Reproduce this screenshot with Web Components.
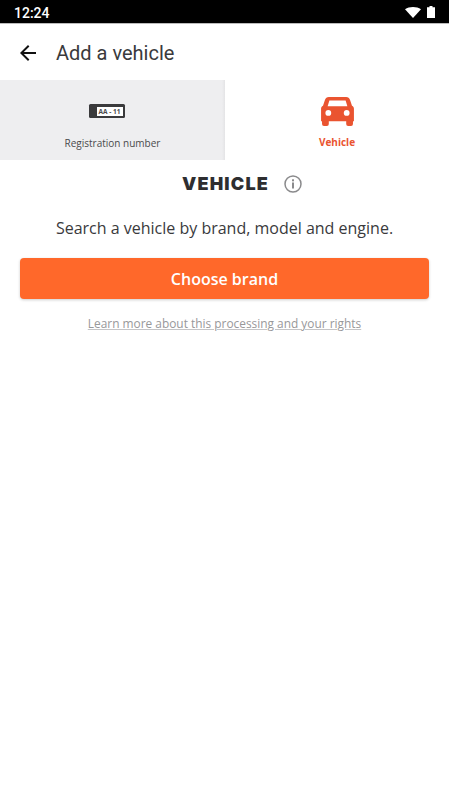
<!DOCTYPE html>
<html><head><meta charset="utf-8"><style>
html,body{margin:0;padding:0;background:#fff}
body{width:449px;height:800px;overflow:hidden}
</style></head><body>
<app-screen>
<status-bar></status-bar>
<app-bar>Add a vehicle</app-bar>
<tab-bar></tab-bar>
<vehicle-panel></vehicle-panel>
</app-screen>
<script>
function def(name, html){
  customElements.define(name, class extends HTMLElement{
    constructor(){super();this.attachShadow({mode:'open'}).innerHTML=html;}
  });
}
def('app-screen',`<style>:host{display:flex;flex-direction:column;width:449px;height:800px;background:#fff}</style><slot></slot>`);
def('status-bar',`<style>
:host{display:flex;align-items:flex-end;justify-content:space-between;height:24px;background:#000;color:#fff;font:500 14px/18px Roboto,sans-serif;padding:0 14px 1px 14px;box-sizing:border-box;border-bottom:1px solid #bbb}
.r{display:flex;align-items:flex-end;gap:6px;padding-bottom:4px}
svg{display:block}
</style><span>12:24</span><span class="r">
<svg width="16" height="11" viewBox="0 0 16 11"><path d="M0 2.300C2.200 .8 5 0 8 0s5.800 .8 8 2.300L8 11z" fill="#fff"/></svg>
<svg width="8" height="12" viewBox="0 0 8 12"><path d="M2.500 0h3v1.300H8V12H0V1.300h2.500z" fill="#fff"/></svg>
</span>`);
def('app-bar',`<style>
:host{display:flex;align-items:center;height:56px;box-sizing:border-box;padding:2px 0 0 20px;font:400 20px Roboto,sans-serif;color:#3a3a3c}
svg{display:block;margin-right:20px}
</style><svg width="16" height="16" viewBox="0 0 16 16"><path d="M16 7H3.800l5.600-5.600L8 0 0 8l8 8 1.400-1.400L3.800 9H16z" fill="#111"/></svg><slot></slot>`);
def('tab-bar',`<style>
:host{display:flex;height:80px;font-family:"Open Sans",sans-serif;font-size:10px}
.t{display:flex;flex-direction:column;align-items:center;box-sizing:border-box}
.a{width:225px;background:linear-gradient(90deg,#eeeef0 0,#eeeef0 222px,#e4e4e6 225px);color:#4a4a4c;padding-top:24px}
.b{width:224px;color:#ea5430;font-weight:700;padding-top:17px}
.p{width:36px;height:14px;background:#3a3a3c;border-radius:1.500px;box-sizing:border-box;padding:3px 2px 2px 8px;display:flex;transform:translateX(-6px)}
.p span{flex:1;background:#fff;color:#4a4a4c;font:700 6.500px/9px "Open Sans",sans-serif;text-align:center}
.l1{margin-top:18px;line-height:14px}
.l2{margin-top:9px;line-height:14px}
svg{display:block}
</style>
<div class="t a"><div class="p"><span>AA - 11</span></div><div class="l1">Registration number</div></div>
<div class="t b"><svg width="33" height="29" viewBox="0 0 34 30"><path fill="#ea5430" fill-rule="evenodd" d="M8 0h18c2 0 3.300 1 4 3l2 6c1.300 .6 2 1.800 2 3.200V25h-1v3a2 2 0 0 1-2 2h-3a2 2 0 0 1-2-2v-3H8v3a2 2 0 0 1-2 2H3a2 2 0 0 1-2-2v-3H0V12.200C0 10.800 .7 9.600 2 9l2-6c.7-2 2-3 4-3zM8.600 3.500 6.800 9.500h20.400l-1.800-6zM7.500 13.500a3 3 0 1 0 0 6 3 3 0 0 0 0-6zm19 0a3 3 0 1 0 0 6 3 3 0 0 0 0-6z"/></svg><div class="l2">Vehicle</div></div>`);
def('vehicle-panel',`<style>
:host{display:flex;flex-direction:column;align-items:center;flex:1;font-family:"Open Sans",sans-serif;color:#333}
.h{display:flex;align-items:center;height:46px;gap:15px;margin-left:35px;padding-top:1px;box-sizing:border-box}
h2{margin:0;font:900 18px Inter,sans-serif;letter-spacing:1.200px;color:#2e2e30}
svg{display:block}
p{margin:0;margin-top:11px;font-size:16px;line-height:22px;color:#3a3a3c}
button{display:block;margin-top:19px;width:409px;height:41px;border:0;border-radius:4px;background:#ff682a;color:#fff;font:600 16px "Open Sans",sans-serif;box-shadow:0 1px 3px rgba(0,0,0,.2)}
a{margin-top:16px;font-size:11.900px;line-height:16px;color:#98989a;text-decoration:underline;text-decoration-color:#c4c4c6}
</style>
<div class="h"><h2>VEHICLE</h2><svg width="18" height="18" viewBox="0 0 18 18"><circle cx="9" cy="9" r="8" fill="none" stroke="#8a8a8c" stroke-width="1.500"/><rect x="8" y="7.500" width="2" height="6" fill="#8a8a8c"/><rect x="8" y="4.300" width="2" height="2" fill="#8a8a8c"/></svg></div>
<p>Search a vehicle by brand, model and engine.</p>
<button>Choose brand</button>
<a>Learn more about this processing and your rights</a>`);
</script>
</body></html>
